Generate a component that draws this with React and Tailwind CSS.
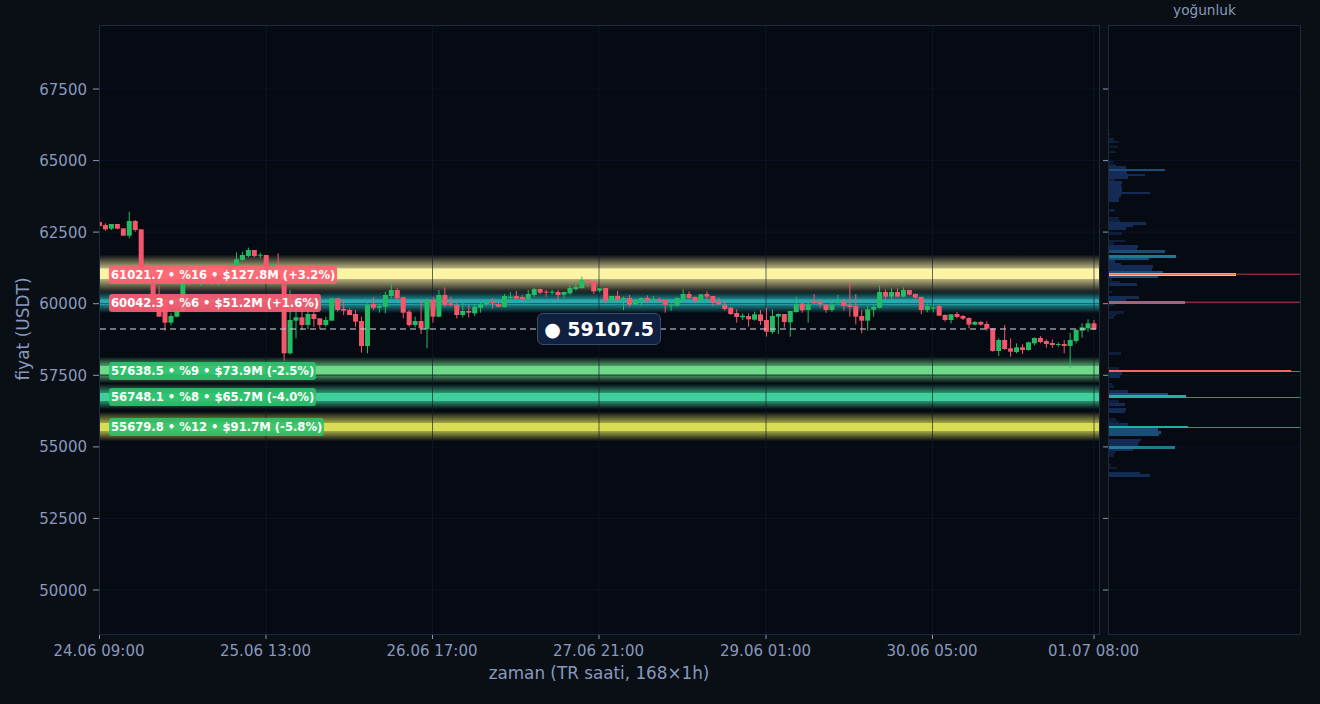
const FONT = "font-['DejaVu_Sans',sans-serif]"

// candle rows: [bodyTop, bodyBottom, wickTop, wickBottom, up], read off 3x crops
const seg = (base, rows) =>
  rows.map(([t, b, h, l, up]) => ({
    top: base + t / 3,
    bottom: base + b / 3,
    high: base + h / 3,
    low: base + l / 3,
    up,
  }))

const candles = [
  ...seg(200, [
    [66, 78, 66, 78, 0], [75, 88, 70, 92, 0], [72, 86, 72, 90, 1], [72, 86, 72, 88, 0], [85, 107, 85, 107, 0],
    [63, 107, 35, 115, 1], [63, 90, 60, 95, 0], [88, 210, 88, 212, 0], [205, 225, 186, 230, 0], [225, 292, 225, 295, 0],
    [290, 350, 258, 350, 0], [312, 368, 300, 392, 0], [348, 368, 340, 376, 1], [333, 350, 325, 352, 1], [250, 333, 245, 335, 1],
    [235, 250, 225, 258, 0], [230, 245, 220, 250, 0], [236, 241, 215, 258, 1], [232, 246, 222, 254, 0], [236, 248, 226, 256, 0],
    [228, 240, 222, 258, 1], [218, 232, 210, 240, 0], [195, 205, 190, 215, 1], [178, 197, 157, 200, 1], [165, 180, 155, 182, 1],
    [150, 168, 143, 172, 1], [150, 168, 150, 172, 0], [164, 167, 158, 175, 1], [165, 230, 165, 235, 0], [193, 200, 190, 210, 1],
    [225, 240, 160, 245, 0], [240, 460, 240, 482, 0], [360, 460, 270, 464, 1],
  ]),
  ...seg(270, [
    [142, 152, 100, 205, 1], [142, 165, 110, 180, 0], [132, 165, 120, 178, 1], [132, 147, 125, 170, 0], [145, 165, 145, 178, 0],
    [150, 165, 140, 170, 1], [85, 152, 85, 152, 1], [85, 120, 85, 125, 0], [117, 122, 88, 135, 0], [120, 135, 115, 135, 0],
    [132, 155, 120, 170, 0], [153, 228, 140, 248, 0], [105, 228, 100, 250, 1], [102, 113, 82, 120, 0], [108, 113, 102, 128, 1],
    [75, 110, 65, 130, 1], [60, 78, 40, 85, 1], [60, 85, 55, 90, 0], [82, 128, 80, 145, 0], [125, 165, 120, 170, 0],
    [153, 165, 140, 172, 1], [153, 175, 90, 192, 0], [90, 178, 85, 235, 1], [90, 140, 80, 158, 0], [75, 140, 60, 142, 1],
  ]),
  ...seg(260, [
    [105, 135, 82, 140, 0], [130, 135, 110, 140, 0], [135, 165, 120, 175, 0], [153, 165, 128, 172, 1], [153, 158, 135, 172, 0],
    [140, 160, 132, 168, 1], [133, 143, 125, 158, 1], [128, 132, 122, 138, 1], [124, 130, 115, 145, 0], [132, 140, 128, 142, 0],
    [108, 141, 102, 142, 1], [110, 114, 97, 122, 1], [108, 116, 93, 118, 0], [111, 117, 105, 125, 0], [102, 117, 90, 120, 1],
    [87, 105, 84, 110, 1], [87, 98, 86, 103, 0], [95, 98, 90, 110, 0], [95, 98, 90, 104, 1], [96, 105, 90, 120, 0],
    [96, 104, 95, 115, 1], [84, 100, 76, 104, 1], [81, 87, 70, 92, 1], [60, 84, 50, 86, 1], [60, 63, 60, 80, 0],
    [64, 94, 64, 102, 0], [85, 92, 84, 98, 1], [84, 122, 84, 130, 0], [108, 122, 108, 122, 1], [108, 120, 93, 125, 0],
    [114, 118, 110, 150, 1], [114, 134, 105, 140, 0], [120, 134, 118, 136, 1], [114, 120, 112, 138, 1], [114, 122, 106, 130, 0],
    [117, 120, 108, 125, 1], [117, 122, 112, 125, 0], [120, 135, 120, 158, 0], [134, 137, 130, 152, 1], [114, 137, 112, 138, 1],
    [102, 118, 88, 122, 1], [102, 114, 94, 116, 0], [111, 122, 110, 130, 0], [103, 122, 103, 122, 1], [102, 110, 94, 120, 0],
    [108, 128, 108, 138, 0], [126, 133, 112, 135, 0], [135, 147, 122, 152, 0], [143, 162, 140, 165, 0], [159, 171, 148, 188, 0],
    [167, 172, 160, 180, 1], [168, 178, 160, 200, 0], [163, 179, 155, 182, 1], [163, 183, 150, 195, 0], [180, 215, 143, 230, 0],
    [168, 216, 148, 222, 1], [162, 170, 160, 222, 1], [162, 186, 162, 203, 0], [153, 187, 153, 230, 1], [133, 156, 110, 158, 1],
    [131, 151, 128, 158, 0], [133, 150, 125, 188, 1], [123, 130, 102, 130, 0], [125, 133, 118, 143, 0], [134, 150, 132, 158, 0],
    [134, 150, 125, 155, 1], [127, 129, 105, 130, 1], [125, 138, 115, 152, 0], [135, 141, 65, 170, 0], [138, 170, 102, 193, 0],
    [168, 182, 150, 220, 0], [148, 182, 138, 212, 1], [141, 149, 132, 170, 1], [96, 143, 76, 145, 1], [96, 110, 88, 118, 0],
    [96, 110, 85, 120, 1], [96, 110, 85, 112, 0], [90, 110, 82, 112, 1], [90, 104, 90, 106, 0], [102, 113, 100, 118, 0],
    [111, 150, 110, 163, 0], [138, 150, 130, 157, 1], [143, 146, 132, 157, 1], [138, 167, 133, 168, 0], [165, 180, 163, 185, 0],
    [163, 180, 163, 190, 1], [162, 171, 156, 175, 0], [168, 176, 165, 180, 0], [174, 194, 172, 205, 0], [186, 194, 183, 196, 1],
    [186, 194, 183, 197, 0], [192, 206, 184, 212, 0], [205, 273, 205, 275, 0], [240, 273, 235, 288, 1], [240, 267, 195, 270, 0],
    [265, 275, 235, 290, 0], [262, 276, 250, 280, 1], [262, 270, 253, 282, 0], [247, 270, 245, 272, 1], [234, 250, 232, 256, 1],
    [234, 246, 228, 250, 0], [243, 252, 238, 263, 0], [249, 255, 238, 263, 0], [252, 255, 247, 260, 1], [252, 258, 240, 280, 0],
    [240, 258, 218, 325, 1], [210, 243, 208, 250, 1], [202, 212, 190, 233, 1], [190, 205, 178, 215, 1], [190, 208, 180, 210, 0],
  ]),
]

const bands = [
  { id: 'b1', y: 255, h: 38, color: '#fdf3a5', core: [0.36, 0.62] },
  { id: 'b2', y: 291, h: 22, color: '#27abb0', core: [0.39, 0.62] },
  { id: 'b3', y: 357, h: 26, color: '#6fd98a', core: [0.36, 0.66] },
  { id: 'b4', y: 384, h: 25, color: '#3ed09a', core: [0.38, 0.66] },
  { id: 'b5', y: 412, h: 29, color: '#d9dc55', core: [0.38, 0.66] },
]

const priceTicks = [
  [89, '67500'], [160.6, '65000'], [232.1, '62500'], [303.7, '60000'],
  [375.3, '57500'], [446.9, '55000'], [518.4, '52500'], [590, '50000'],
]

const timeTicks = [
  [99.5, '24.06 09:00'], [266, '25.06 13:00'], [432.5, '26.06 17:00'], [599, '27.06 21:00'],
  [766, '29.06 01:00'], [932.5, '30.06 05:00'], [1094, '01.07 08:00'],
]

const levels = [
  { text: '61021.7 • %16 • $127.8M (+3.2%)', cls: 'top-[240px] bg-[#ff5c70]/90' },
  { text: '60042.3 • %6 • $51.2M (+1.6%)', cls: 'top-[268px] bg-[#ff5c70]/90' },
  { text: '57638.5 • %9 • $73.9M (-2.5%)', cls: 'top-[336px] bg-[#2cc26c]/90' },
  { text: '56748.1 • %8 • $65.7M (-4.0%)', cls: 'top-[362px] bg-[#2cc26c]/90' },
  { text: '55679.8 • %12 • $91.7M (-5.8%)', cls: 'top-[392px] bg-[#2cc26c]/90' },
]

const D = '#0f1e3a'
const M = '#142c55'
const L = '#174f76'
const T = '#1f7a94'
const A = '#22b0a4'

// density rows: [zoomY start, zoomY end, zoomX end, colour]
const rowsTop = [
  [10, 15, 62, D], [24, 33, 72, D], [33, 39, 87, D], [47, 53, 84, D], [63, 69, 78, D], [93, 100, 70, D],
  [102, 108, 78, D], [108, 117, 108, M], [117, 123, 225, L], [123, 132, 111, M], [132, 138, 165, M], [138, 147, 114, M],
  [147, 153, 75, D], [153, 162, 96, M], [162, 168, 93, M], [168, 187, 96, M], [186, 192, 180, M], [192, 201, 93, M],
  [201, 216, 87, M], [237, 246, 75, D], [261, 270, 87, D], [270, 276, 90, D], [276, 285, 168, M], [285, 291, 129, M],
  [291, 300, 108, M], [306, 315, 96, D], [330, 336, 105, D], [336, 345, 72, D], [345, 354, 144, M], [354, 360, 141, M],
  [360, 369, 225, L], [375, 384, 258, T], [384, 390, 177, L], [390, 399, 75, M], [399, 405, 93, M], [405, 414, 189, M],
  [414, 423, 186, M], [423, 429, 219, L], [429, 438, 438, '#f5c87a'], [438, 444, 204, L], [444, 453, 66, D], [453, 459, 90, D],
  [459, 468, 141, M], [483, 489, 66, D], [498, 507, 147, M], [507, 513, 108, M], [513, 522, 285, '#3f8f9c'], [522, 528, 75, D],
  [543, 552, 102, D], [552, 558, 78, D], [558, 567, 72, D],
]

const rowsBottom = [
  [36, 45, 93, D], [81, 90, 87, D], [90, 96, 603, '#f06a60'], [96, 105, 96, M], [105, 114, 90, M], [129, 135, 66, D],
  [135, 144, 72, D], [150, 159, 114, M], [159, 165, 234, L], [165, 174, 288, A], [180, 189, 87, D], [189, 198, 105, M],
  [204, 213, 108, M], [213, 219, 105, M], [234, 243, 78, D], [243, 249, 87, D], [249, 258, 114, M], [258, 264, 294, A],
  [264, 273, 204, L], [273, 282, 213, L], [282, 288, 207, L], [297, 303, 153, M], [303, 309, 147, M], [309, 318, 144, M],
  [318, 327, 255, T], [327, 333, 129, M], [333, 342, 75, D], [342, 351, 72, D], [372, 378, 63, D], [381, 387, 81, D],
  [396, 402, 150, M], [402, 411, 180, M],
]

const toBar = (base) => ([a, b, x, fill]) => ({ y: base + a / 3, h: (b - a) / 3, w: (x - 57) / 3, fill })
const bars = [...rowsTop.map(toBar(130)), ...rowsBottom.map(toBar(340))]

function Plot() {
  return (
    <svg viewBox="100 26 999 608" className="block h-[608px] w-[999px]">
      <defs>
        {bands.map((b) => (
          <linearGradient key={b.id} id={b.id} x1="0" y1="0" x2="0" y2="1">
            <stop offset="0" stopColor={b.color} stopOpacity="0.02" />
            <stop offset={b.core[0] - 0.01} stopColor={b.color} stopOpacity="0.72" />
            <stop offset={b.core[0]} stopColor={b.color} stopOpacity="1" />
            <stop offset={b.core[1]} stopColor={b.color} stopOpacity="1" />
            <stop offset={b.core[1] + 0.01} stopColor={b.color} stopOpacity="0.72" />
            <stop offset="1" stopColor={b.color} stopOpacity="0.02" />
          </linearGradient>
        ))}
      </defs>
      {bands.map((b) => (
        <rect key={b.id} x="100" y={b.y} width="999" height={b.h} fill={`url(#${b.id})`} />
      ))}
      {priceTicks.map(([y]) => (
        <line key={y} x1="100" x2="1099" y1={y} y2={y} stroke="#101a2e" strokeOpacity="0.6" />
      ))}
      {timeTicks.map(([x]) => (
        <line key={x} x1={x} x2={x} y1="26" y2="634" stroke="#101a2e" strokeOpacity="0.65" />
      ))}
      {candles.map((c, i) => {
        const x = 99.5 + i * 5.955
        const color = c.up ? '#22bd62' : '#f4566c'
        return (
          <g key={i}>
            <line x1={x} x2={x} y1={c.high} y2={c.low} stroke={color} strokeWidth="1" />
            <rect x={x - 2.5} y={c.top} width="5" height={Math.max(c.bottom - c.top, 1)} fill={color} />
          </g>
        )
      })}
      <line x1="100" x2="1099" y1="329" y2="329" stroke="#c4c8d0" strokeOpacity="0.75" strokeWidth="1.5" strokeDasharray="6 4" />
    </svg>
  )
}

function Density() {
  return (
    <svg viewBox="1109 26 191 608" className="block h-[608px] w-[191px]">
      {priceTicks.map(([y]) => (
        <line key={y} x1="1109" x2="1300" y1={y} y2={y} stroke="#101a2e" strokeOpacity="0.6" />
      ))}
      {bars.map((b) => (
        <rect key={b.y} x="1109" y={b.y} width={b.w} height={b.h} fill={b.fill} />
      ))}
      <line x1="1236" x2="1300" y1="274.2" y2="274.2" stroke="#c43a48" />
      <line x1="1109" x2="1236" y1="274.2" y2="274.2" stroke="#e8503f" />
      <line x1="1185" x2="1300" y1="302.2" y2="302.2" stroke="#c43a48" />
      <line x1="1109" x2="1185" y1="302.2" y2="302.2" stroke="#d4505a" />
      <line x1="1291" x2="1300" y1="371.5" y2="371.5" stroke="#22a06a" />
      <line x1="1186" x2="1300" y1="397.5" y2="397.5" stroke="#22a06a" />
      <line x1="1188" x2="1300" y1="427.5" y2="427.5" stroke="#22a06a" />
    </svg>
  )
}

export default function App() {
  return (
    <div className={`${FONT} h-[704px] w-[1320px] overflow-hidden bg-[#0a0e15] text-[#8899bd]`}>
      <div className="flex h-[25px]">
        <div className="w-[1108px]" />
        <div className="w-[193px] text-center text-[13.7px] leading-[20px]">yoğunluk</div>
      </div>

      <div className="flex h-[610px]">
        <svg viewBox="0 25 99 610" className="block h-[610px] w-[99px] shrink-0">
          <text x="0" y="0" transform="translate(29 329) rotate(-90)" textAnchor="middle" fontSize="17" fill="#8899bd">
            fiyat (USDT)
          </text>
          {priceTicks.map(([y, label]) => (
            <g key={y}>
              <text x="87" y={y + 5.5} textAnchor="end" fontSize="15" fill="#8899bd">{label}</text>
              <line x1="93" x2="99" y1={y} y2={y} stroke="#8899bd" />
            </g>
          ))}
        </svg>

        <div className="relative h-[610px] w-[1001px] shrink-0 border border-[#1e293b] bg-[#060a12]">
          <Plot />
          {levels.map((l) => (
            <span
              key={l.text}
              className={`absolute left-[9px] whitespace-nowrap rounded-[3px] px-[2px] text-[11.6px] font-bold leading-[18px] text-white ${l.cls}`}
            >
              {l.text}
            </span>
          ))}
          <div className="absolute left-[437px] top-[287px] flex h-[32px] w-[124px] items-center justify-center whitespace-nowrap rounded-md border border-[#3b4c70] bg-[#0f2040] text-[19px] font-bold leading-none text-white">
            ● 59107.5
          </div>
        </div>

        <svg viewBox="1100 25 8 610" className="block h-[610px] w-[8px] shrink-0">
          {priceTicks.map(([y]) => (
            <line key={y} x1="1103" x2="1108" y1={y} y2={y} stroke="#8899bd" />
          ))}
        </svg>

        <div className="h-[610px] w-[193px] shrink-0 border border-[#1e293b] bg-[#060a12]">
          <Density />
        </div>
      </div>

      <svg viewBox="0 635 1320 69" className="block h-[69px] w-[1320px]">
        {timeTicks.map(([x, label]) => (
          <g key={x}>
            <line x1={x} x2={x} y1="635" y2="639" stroke="#8899bd" />
            <text x={x - 0.5} y="656" textAnchor="middle" fontSize="15" fill="#8899bd">{label}</text>
          </g>
        ))}
        <text x="599" y="678.5" textAnchor="middle" fontSize="16.8" fill="#8899bd">zaman (TR saati, 168×1h)</text>
      </svg>
    </div>
  )
}
